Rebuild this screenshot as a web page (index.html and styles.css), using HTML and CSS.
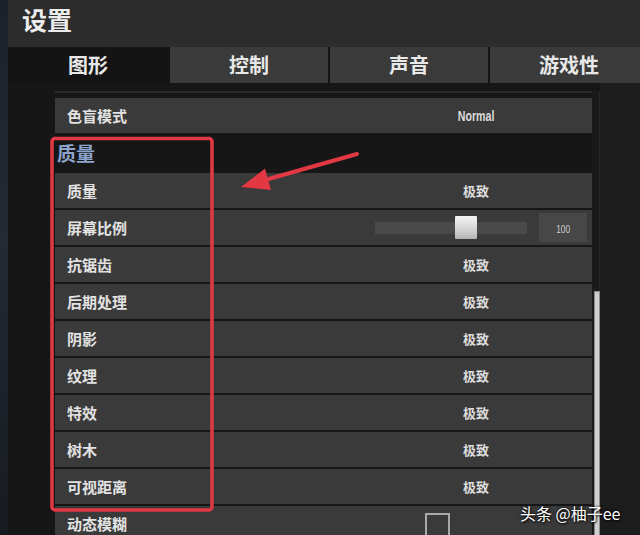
FILE: index.html
```html
<!DOCTYPE html>
<html lang="zh-CN">
<head>
    <meta charset="UTF-8">
    <meta name="viewport" content="width=device-width, initial-scale=1.0">
    <title>设置 - 图形</title>
    <link rel="stylesheet" href="styles.css">
</head>
<body>

<div class="window">
    <div class="titlebar">设置</div>

    <div class="tabs">
        <div class="tab active">图形</div>
        <div class="tab">控制</div>
        <div class="tab">声音</div>
        <div class="tab">游戏性</div>
    </div>

    <div class="content">
        <div class="list">
            <div class="row">
                <div class="label">色盲模式</div>
                <div class="value"><span class="latin">Normal</span></div>
            </div>

            <!-- 质量分组 -->
            <div class="group-title">质量</div>

            <div class="row">
                <div class="label">质量</div>
                <div class="value">极致</div>
            </div>
            <div class="row">
                <div class="label">屏幕比例</div>
                <div class="value slider-value">
                    <div class="track"><div class="thumb"></div></div>
                    <div class="num-box"><span class="latin small">100</span></div>
                </div>
            </div>
            <div class="row">
                <div class="label">抗锯齿</div>
                <div class="value">极致</div>
            </div>
            <div class="row">
                <div class="label">后期处理</div>
                <div class="value">极致</div>
            </div>
            <div class="row">
                <div class="label">阴影</div>
                <div class="value">极致</div>
            </div>
            <div class="row">
                <div class="label">纹理</div>
                <div class="value">极致</div>
            </div>
            <div class="row">
                <div class="label">特效</div>
                <div class="value">极致</div>
            </div>
            <div class="row">
                <div class="label">树木</div>
                <div class="value">极致</div>
            </div>
            <div class="row">
                <div class="label">可视距离</div>
                <div class="value">极致</div>
            </div>
            <div class="row">
                <div class="label">动态模糊</div>
                <div class="value check-value"><div class="checkbox"></div></div>
            </div>
        </div>

        <div class="scrollbar"><div class="scroll-thumb"></div></div>
        <div class="side"></div>
    </div>
</div>

<!-- 红色标注框和箭头 -->
<svg class="markup" width="640" height="535" viewBox="0 0 640 535">
    <rect x="52" y="138.5" width="160" height="371.5" rx="3" fill="none" stroke="#e13844" stroke-width="3.5"/>
    <line x1="357" y1="154" x2="265" y2="180" stroke="#e13844" stroke-width="4" stroke-linecap="round"/>
    <polygon points="241,187 265,168.5 271,190" fill="#e13844"/>
</svg>

<div class="watermark">头条 @柚子ee</div>

</body>
</html>
```

FILE: styles.css
```css
body {
    margin: 0;
    width: 640px;
    height: 535px;
    overflow: hidden;
    position: relative;
    background: linear-gradient(180deg, #1d2129 0%, #232a35 45%, #171a20 100%);
    font-family: "Noto Sans CJK SC", "Noto Sans", sans-serif;
    color: #e4e4e4;
}
.window {
    margin-left: 8px;
    height: 535px;
    overflow: hidden;
    background-color: #161616;
    display: flex;
    flex-direction: column;
}
.titlebar {
    flex-shrink: 0;
    height: 44px;
    padding: 3px 0 0 14px;
    background-color: #2c2c2c;
    font-size: 25px;
    font-weight: bold;
    line-height: 32px;
    color: #ececec;
}
.tabs {
    flex-shrink: 0;
    display: flex;
    gap: 2px;
    height: 36px;
    background-color: #141414;
}
.tab {
    width: 158px;
    flex-shrink: 0;
    background-color: #3a3a3a;
    text-align: center;
    font-size: 20px;
    font-weight: bold;
    line-height: 36px;
    color: #e8e8e8;
}
.tab.active {
    width: 160px;
    background-color: #141414;
}
.content {
    flex-shrink: 0;
    display: grid;
    grid-template-columns: 537px 8px 1fr;
    padding-left: 47px;
}
.list {
    margin-top: 8px;
    border-top: 2px solid #2b2b2b;
    padding-top: 5px;
}
.row {
    display: flex;
    height: 35px;
    margin-bottom: 2px;
    background-color: #3a3a3a;
    align-items: center;
}
.label {
    width: 298px;
    padding-left: 12px;
    font-size: 15px;
    font-weight: bold;
    color: #e2e2e2;
}
.value {
    flex: 1;
    padding-right: 5px;
    text-align: center;
    font-size: 13px;
    font-weight: bold;
    color: #dcdcdc;
}
.latin {
    display: inline-block;
    font-family: "Liberation Sans", Arial, sans-serif;
    font-size: 14px;
    transform: scaleX(0.76);
}
.latin.small {
    font-size: 11px;
    font-weight: normal;
    color: #cfcfcf;
}
.group-title {
    height: 40px;
    margin-top: -2px;
    padding-left: 2px;
    font-size: 19px;
    font-weight: bold;
    line-height: 40px;
    color: #8ca5cf;
}
.slider-value {
    display: flex;
    align-items: center;
    padding-left: 10px;
}
.track {
    position: relative;
    width: 152px;
    height: 12px;
    background-color: #4a4a4a;
}
.thumb {
    position: absolute;
    left: 80px;
    top: -6px;
    width: 22px;
    height: 23px;
    background: linear-gradient(180deg, #f4f4f4 0%, #d6d6d6 55%, #b4b4b4 100%);
    border-radius: 1px;
}
.num-box {
    width: 48px;
    height: 29px;
    margin-left: 12px;
    background-color: #474747;
    line-height: 29px;
    text-align: center;
}
.check-value {
    display: flex;
    padding-left: 60px;
    align-self: flex-start;
    padding-top: 7px;
}
.checkbox {
    width: 21px;
    height: 24px;
    border: 2px solid #a8a8a8;
}
.scrollbar {
    margin-top: 8px;
    padding: 200px 0 0 2px;
    background-color: #1a1a1a;
    border-right: 1px solid #262626;
}
.scroll-thumb {
    width: 4px;
    height: 300px;
    background-color: #cfcfcf;
    border: 1px solid #8a8a8a;
}
.side {
    background-color: #1c1c1c;
}

/* 标注层 */
.markup {
    position: absolute;
    top: 0;
    left: 0;
}
.watermark {
    position: absolute;
    left: 520px;
    top: 501px;
    font-size: 16px;
    color: #ffffff;
    text-shadow: 0 0 3px rgba(0, 0, 0, 0.9), 1px 1px 2px rgba(0, 0, 0, 0.8);
    white-space: nowrap;
}
```
